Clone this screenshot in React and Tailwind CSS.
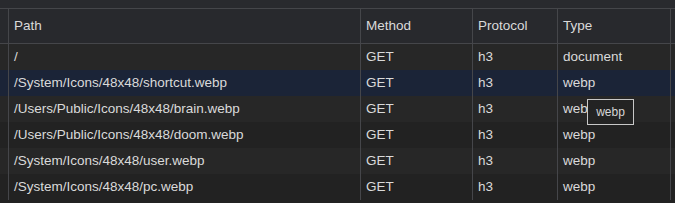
import React from "react";

const rows = [
  { path: "/", method: "GET", protocol: "h3", type: "document" },
  { path: "/System/Icons/48x48/shortcut.webp", method: "GET", protocol: "h3", type: "webp", selected: true },
  { path: "/Users/Public/Icons/48x48/brain.webp", method: "GET", protocol: "h3", type: "webp" },
  { path: "/Users/Public/Icons/48x48/doom.webp", method: "GET", protocol: "h3", type: "webp" },
  { path: "/System/Icons/48x48/user.webp", method: "GET", protocol: "h3", type: "webp" },
  { path: "/System/Icons/48x48/pc.webp", method: "GET", protocol: "h3", type: "webp" },
];

function Row({ r, i }) {
  const bg = r.selected ? "bg-[#1b2437]" : i % 2 === 0 ? "bg-[#272727]" : "bg-[#222222]";
  return (
    <div className={`flex h-[26px] items-center ${bg}`}>
      <div className="w-[9px] h-full shrink-0 border-r border-[#45464a]" />
      <div className="w-[352px] h-full shrink-0 border-r border-[#45464a] pl-[5px] flex items-center">{r.path}</div>
      <div className="w-[112px] h-full shrink-0 border-r border-[#45464a] pl-[5px] flex items-center">{r.method}</div>
      <div className="w-[85px] h-full shrink-0 border-r border-[#45464a] pl-[5px] flex items-center">{r.protocol}</div>
      <div className="w-[113px] h-full shrink-0 border-r border-[#45464a] pl-[5px] flex items-center">{r.type}</div>
      <div className="flex-1 h-full" />
    </div>
  );
}

export default function App() {
  return (
    <div
      className="relative w-[675px] h-[203px] overflow-hidden bg-[#222222] text-[#dadada] text-[13.5px]"
      style={{ fontFamily: '"Liberation Sans", Arial, sans-serif' }}
    >
      <div className="h-[8px] bg-[#292a2e] border-b border-[#45464a] box-content" />
      <div className="flex h-[34px] items-center bg-[#28292d] border-b border-[#45464a] box-content">
        <div className="w-[9px] h-full shrink-0 border-r border-[#45464a]" />
        <div className="w-[352px] h-full shrink-0 border-r border-[#45464a] pl-[5px] flex items-center">Path</div>
        <div className="w-[112px] h-full shrink-0 border-r border-[#45464a] pl-[5px] flex items-center">Method</div>
        <div className="w-[85px] h-full shrink-0 border-r border-[#45464a] pl-[5px] flex items-center">Protocol</div>
        <div className="w-[113px] h-full shrink-0 border-r border-[#45464a] pl-[5px] flex items-center">Type</div>
        <div className="flex-1 h-full" />
      </div>
      {rows.map((r, i) => (
        <Row key={i} r={r} i={i} />
      ))}
      <div className="absolute left-[587px] top-[99px] w-[47px] h-[26px] border border-[#c8c8c8] bg-[#232323] text-[12px] text-[#d6d6d6] flex items-center justify-center">
        webp
      </div>
    </div>
  );
}
